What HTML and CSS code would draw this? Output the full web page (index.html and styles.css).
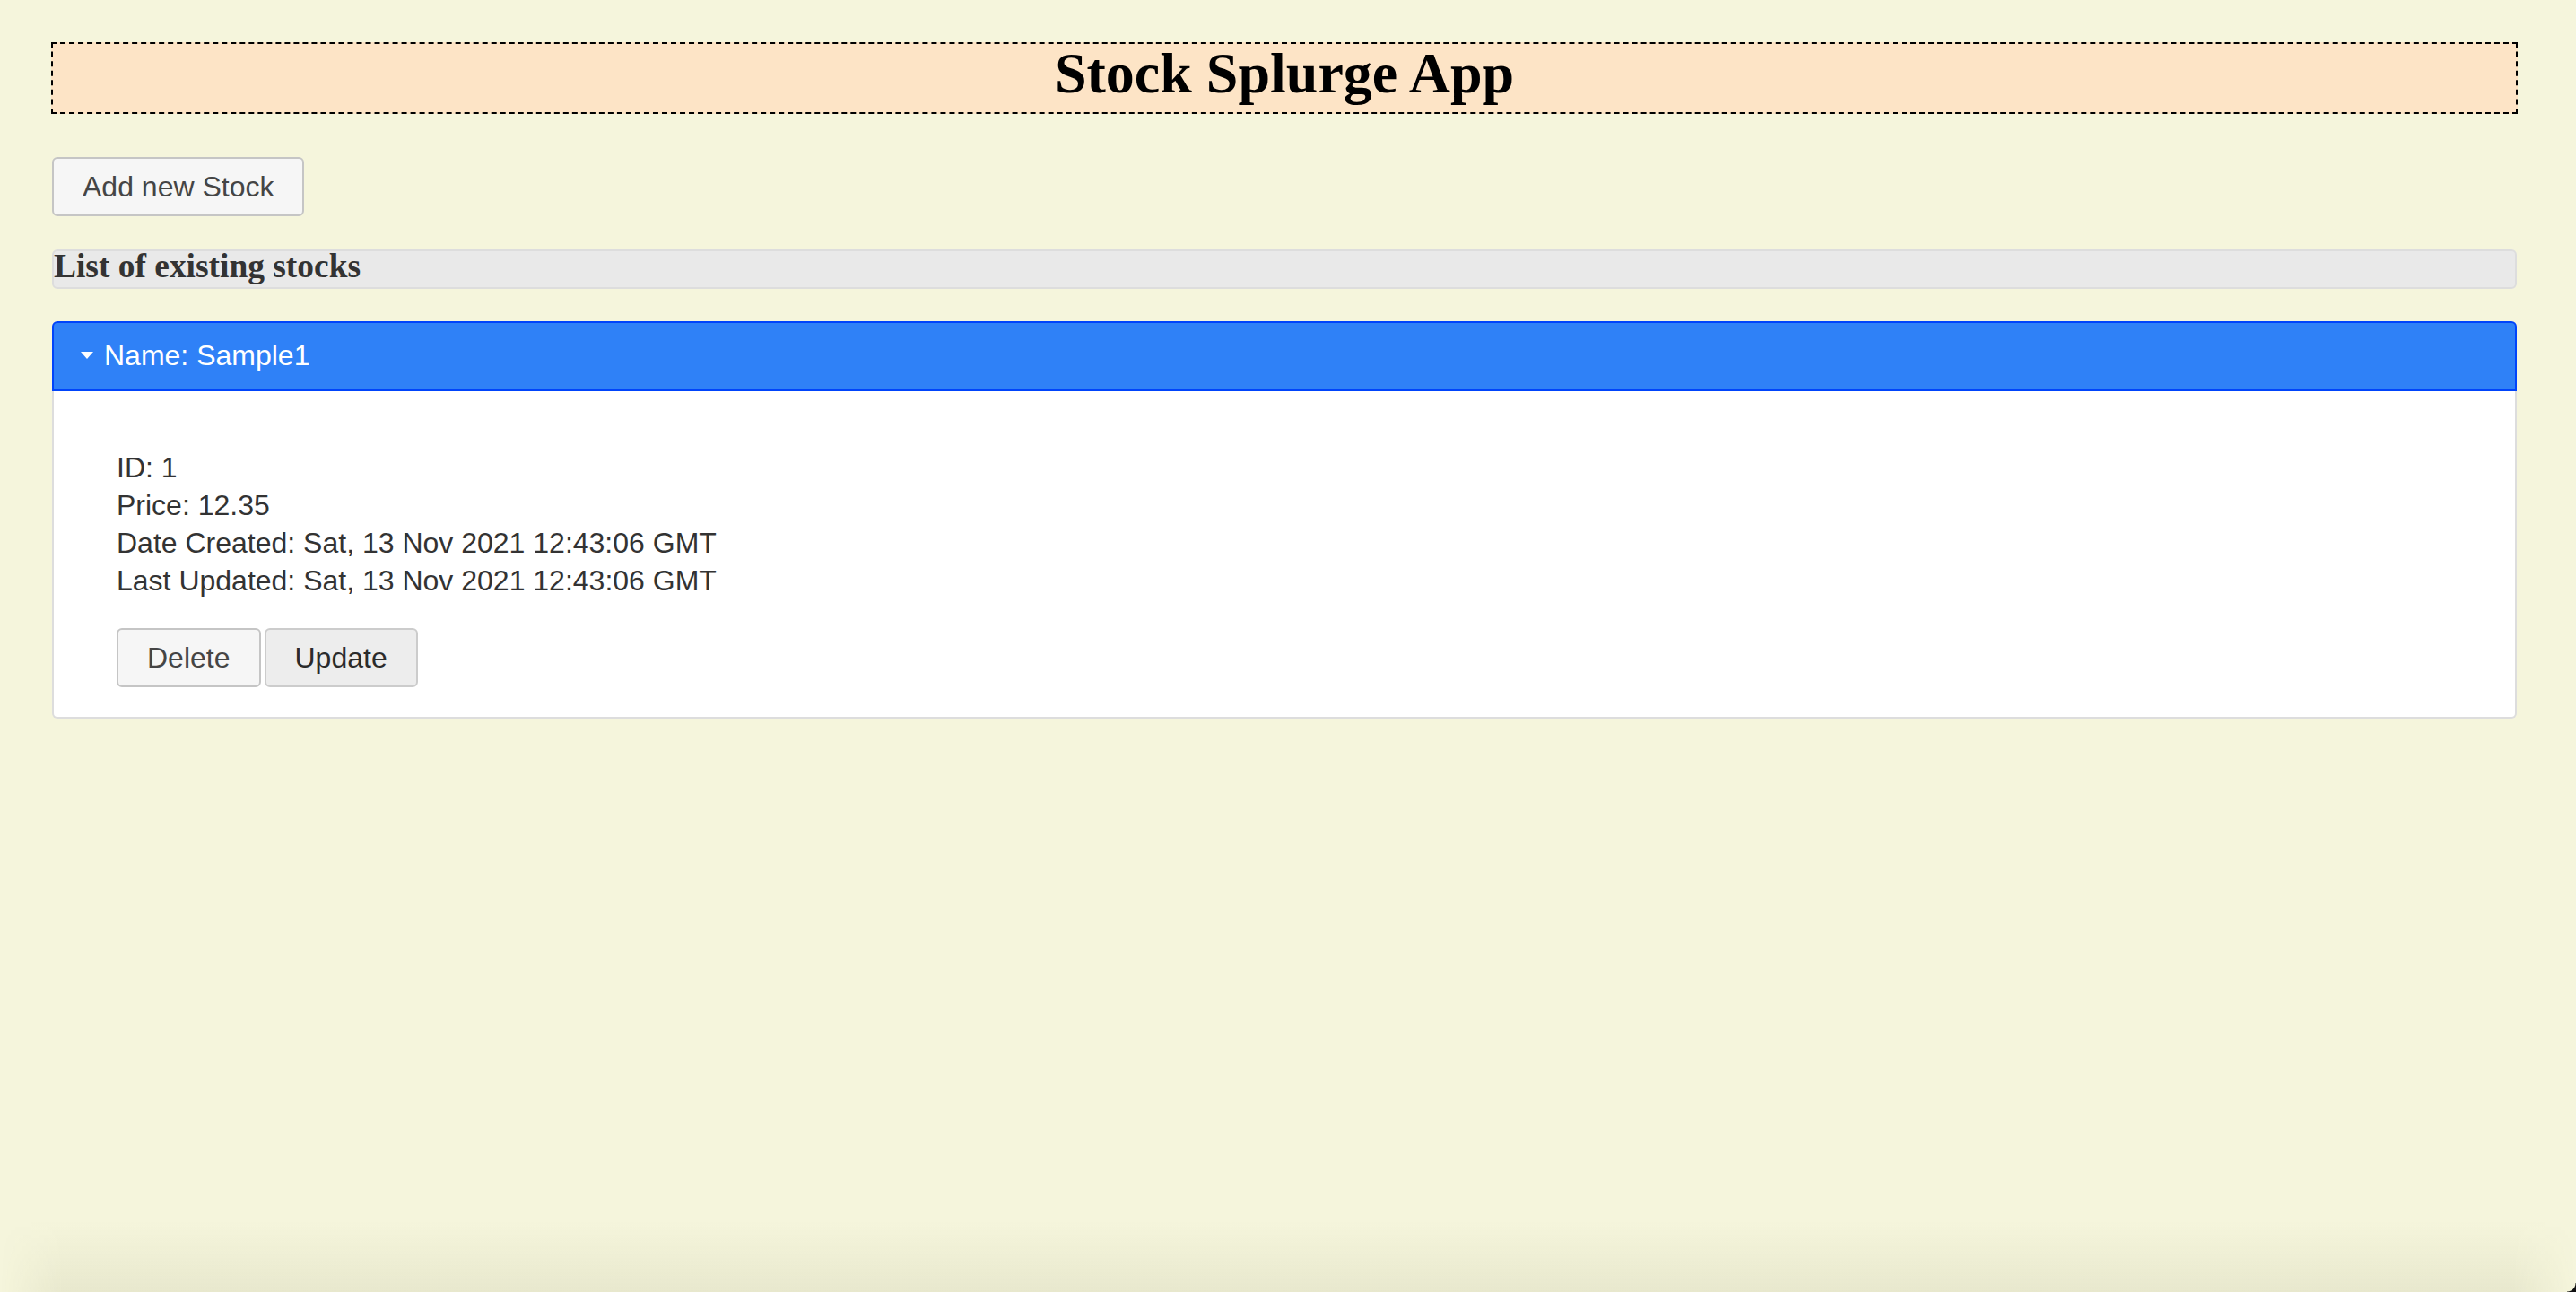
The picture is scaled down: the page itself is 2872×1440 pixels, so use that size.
FILE: index.html
```html
<!DOCTYPE html>
<html lang="en">
<head>
<meta charset="utf-8">
<title>Stock Splurge App</title>
<link rel="stylesheet" href="styles.css">
</head>
<body>
<div class="page">
  <h1 class="app-title">Stock Splurge App</h1>
  <div class="toolbar">
    <button class="ui-btn">Add new Stock</button>
  </div>
  <h3 class="list-title">List of existing stocks</h3>
  <div class="accordion">
    <div class="acc-header">
      <svg class="acc-icon" width="14" height="8" viewBox="0 0 14 8"><path d="M0 0 L14 0 L7 8 Z" fill="#ffffff"/></svg>
      <span>Name: Sample1</span>
    </div>
    <div class="acc-content">
      <p class="details">ID: 1<br>Price: 12.35<br>Date Created: Sat, 13 Nov 2021 12:43:06 GMT<br>Last Updated: Sat, 13 Nov 2021 12:43:06 GMT</p>
      <div class="actions">
        <button class="ui-btn">Delete</button>
        <button class="ui-btn ui-btn-hover">Update</button>
      </div>
    </div>
  </div>
</div>
<div class="window-shade"></div>
<div class="window-corner"></div>
</body>
</html>
```

FILE: styles.css
```css
html, body {
  margin: 0;
  padding: 0;
}

body {
  background: #f5f5dc;
  font-family: "Liberation Sans", Arial, Helvetica, sans-serif;
  font-size: 32px;
  color: #333333;
  min-height: 1440px;
  overflow: hidden;
}

.page {
  padding: 47px 66px 0 58px;
}

.app-title {
  margin: 0 -1px;
  border: 2px dashed #000000;
  background: #fde4c6;
  color: #000000;
  font-family: "Liberation Serif", "Times New Roman", serif;
  font-size: 64px;
  font-weight: bold;
  line-height: 66px;
  padding: 0 0 10px;
  text-align: center;
}

.toolbar {
  margin-top: 48px;
}

.ui-btn {
  display: inline-block;
  margin: 0;
  font-family: "Liberation Sans", Arial, Helvetica, sans-serif;
  font-size: 32px;
  line-height: 37px;
  padding: 12.5px 32px;
  background: #f6f6f6;
  border: 2px solid #c5c5c5;
  border-radius: 6px;
  color: #454545;
  cursor: pointer;
}

.ui-btn-hover {
  background: #ededed;
  border-color: #cccccc;
  color: #2b2b2b;
}

.list-title {
  margin: 37px 0 36px;
  font-family: "Liberation Serif", "Times New Roman", serif;
  font-size: 37.44px;
  font-weight: bold;
  line-height: 34px;
  padding: 0 0 6px;
  color: #333333;
  background: #e9e9e9;
  border: 2px solid #dddddd;
  border-radius: 6px;
}

.accordion {
  display: flex;
  flex-direction: column;
}

.acc-header {
  display: flex;
  align-items: center;
  background: #2f81f7;
  border: 2px solid #0044fb;
  border-radius: 6px 6px 0 0;
  color: #ffffff;
  line-height: 38px;
  padding: 17px 0 19px 30px;
}

.acc-icon {
  display: block;
  margin-right: 12px;
  margin-top: 0;
}

.acc-content {
  background: #ffffff;
  border: 2px solid #dddddd;
  border-top: none;
  border-radius: 0 0 6px 6px;
  padding: 32px 70px 33px;
}

.details {
  margin: 32px 0 32px;
  line-height: 42px;
  color: #333333;
}

.actions {
  display: flex;
  gap: 4px;
}

.window-shade {
  position: fixed;
  left: 0;
  right: 0;
  bottom: 0;
  height: 80px;
  background: linear-gradient(to bottom, rgba(80, 80, 30, 0) 0%, rgba(80, 80, 30, 0.03) 45%, rgba(80, 80, 30, 0.075) 100%);
  -webkit-mask-image: linear-gradient(to right, transparent 0, #000 70px, #000 calc(100% - 70px), transparent 100%);
  mask-image: linear-gradient(to right, transparent 0, #000 70px, #000 calc(100% - 70px), transparent 100%);
  pointer-events: none;
}

.window-corner {
  position: fixed;
  right: 0;
  bottom: 0;
  width: 10px;
  height: 10px;
  background: radial-gradient(circle at 0 0, transparent 9px, #111111 10px);
  pointer-events: none;
}
```
